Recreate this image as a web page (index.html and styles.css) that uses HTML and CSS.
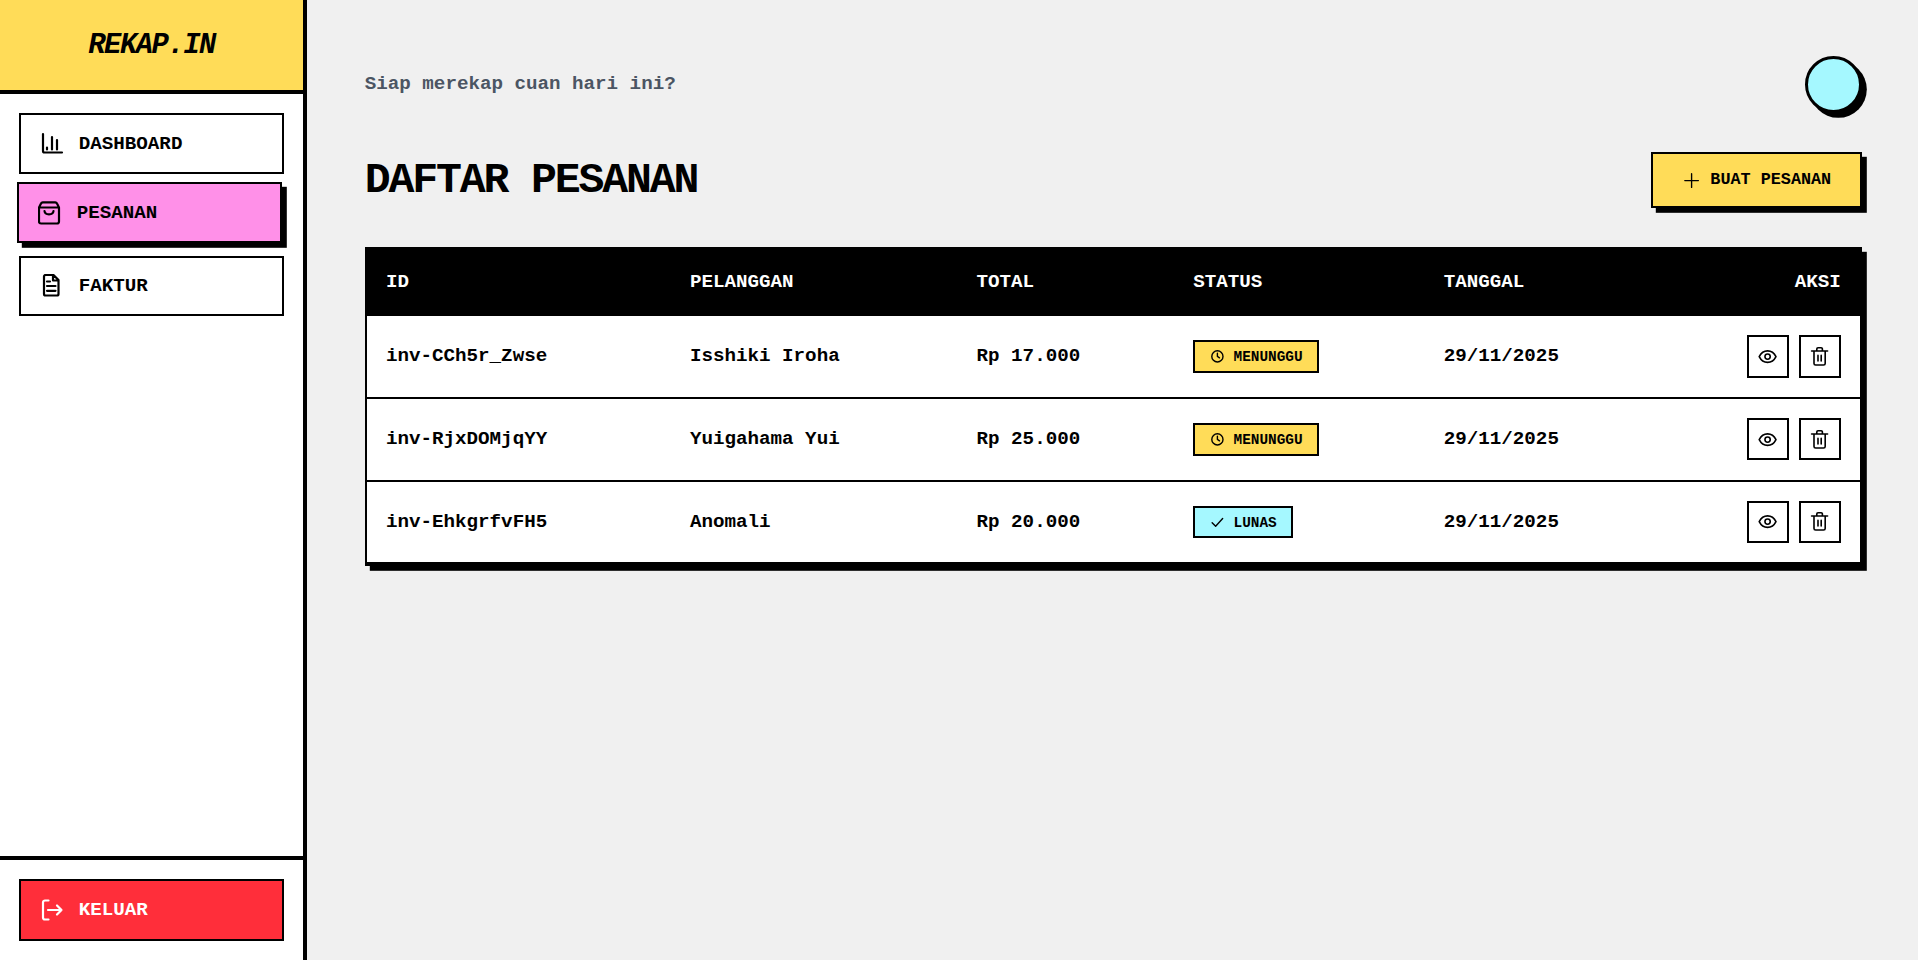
FILE: index.html
```html
<!DOCTYPE html>
<html lang="en">
<head>
    <meta charset="UTF-8">
    <meta name="viewport" content="width=device-width, initial-scale=1.0">
    <title>Rekap.in - Daftar Pesanan</title>
    <link rel="stylesheet" href="styles.css">
</head>
<body>
    <aside class="sidebar">
        <div class="brand">REKAP.IN</div>
        <nav class="nav">
            <a class="nav-item" href="#">
                <svg class="nav-icon" viewBox="0 0 24 24"><path d="M3 2v17a1.5 1.5 0 0 0 1.500 1.500H22M7 15.500v2M12 5v12.500M17 8v9.500"/></svg>
                DASHBOARD
            </a>
            <a class="nav-item active" href="#">
                <svg class="nav-icon" viewBox="0 0 24 24"><path d="M5 1.300h12a2 2 0 0 1 2 1.200l2 4v14a2 2 0 0 1-2 2H3a2 2 0 0 1-2-2v-14l2-4a2 2 0 0 1 2-1.200zM1 6.500h20M6.500 10c.5 4.500 8.500 4.500 9 0"/></svg>
                PESANAN
            </a>
            <a class="nav-item" href="#">
                <svg class="nav-icon" viewBox="0 0 24 24"><path d="M5.500 1h8l5 5v14a1.500 1.500 0 0 1-1.500 1.500H5.500A1.500 1.500 0 0 1 4 20V2.500A1.500 1.500 0 0 1 5.500 1zM13 1v5.500h5.500M7 7.500h3M7 12h8.500M7 16.800h8.500"/></svg>
                FAKTUR
            </a>
        </nav>
        <div class="sidebar-foot">
            <a class="nav-item logout" href="#">
                <svg class="nav-icon" viewBox="0 0 24 24"><path d="M8.500 2.500H5a2 2 0 0 0-2 2v15a2 2 0 0 0 2 2h3.500M8 12h13.500M17 7.500l4.500 4.500-4.500 4.500"/></svg>
                KELUAR
            </a>
        </div>
    </aside>

    <main class="main">
        <div class="topbar">
            <p class="greeting">Siap merekap cuan hari ini?</p>
            <div class="avatar"></div>
        </div>

        <div class="page-head">
            <h1 class="page-title">DAFTAR PESANAN</h1>
            <button type="button" class="btn-create">
                <svg class="btn-icon" viewBox="0 0 24 24"><path d="M12 3.500v17M3.500 12h17"/></svg>
                BUAT PESANAN
            </button>
        </div>

        <div class="table-wrap">
            <table class="orders">
                <colgroup>
                    <col class="col-id">
                    <col class="col-name">
                    <col class="col-total">
                    <col class="col-status">
                    <col class="col-date">
                    <col>
                </colgroup>
                <thead>
                    <tr>
                        <th>ID</th>
                        <th>PELANGGAN</th>
                        <th>TOTAL</th>
                        <th>STATUS</th>
                        <th>TANGGAL</th>
                        <th class="right">AKSI</th>
                    </tr>
                </thead>
                <tbody>
                    <tr>
                        <td>inv-CCh5r_Zwse</td>
                        <td>Isshiki Iroha</td>
                        <td>Rp 17.000</td>
                        <td>
                            <span class="badge waiting">
                                <svg class="badge-icon" viewBox="0 0 24 24"><circle cx="12" cy="12" r="8"/><path d="M12 7.500V12l3 2"/></svg>
                                MENUNGGU
                            </span>
                        </td>
                        <td>29/11/2025</td>
                        <td>
                            <div class="actions">
                                <button type="button" class="btn-action">
                                    <svg class="action-icon" viewBox="0 0 24 24"><path d="M1.500 12C4 7 7.500 4.800 12 4.800S20 7 22.500 12C20 17 16.500 19.200 12 19.200S4 17 1.500 12z"/><circle cx="12" cy="12" r="3.300"/></svg>
                                </button>
                                <button type="button" class="btn-action">
                                    <svg class="action-icon" viewBox="0 0 24 24"><path d="M2 5h20M5 5v15.500a2 2 0 0 0 2 2h10a2 2 0 0 0 2-2V5M8.500 5V2.500a1.500 1.500 0 0 1 1.500-1.500h4a1.500 1.500 0 0 1 1.500 1.500V5M10 10.500v7M14 10.500v7"/></svg>
                                </button>
                            </div>
                        </td>
                    </tr>
                    <tr>
                        <td>inv-RjxDOMjqYY</td>
                        <td>Yuigahama Yui</td>
                        <td>Rp 25.000</td>
                        <td>
                            <span class="badge waiting">
                                <svg class="badge-icon" viewBox="0 0 24 24"><circle cx="12" cy="12" r="8"/><path d="M12 7.500V12l3 2"/></svg>
                                MENUNGGU
                            </span>
                        </td>
                        <td>29/11/2025</td>
                        <td>
                            <div class="actions">
                                <button type="button" class="btn-action">
                                    <svg class="action-icon" viewBox="0 0 24 24"><path d="M1.500 12C4 7 7.500 4.800 12 4.800S20 7 22.500 12C20 17 16.500 19.200 12 19.200S4 17 1.500 12z"/><circle cx="12" cy="12" r="3.300"/></svg>
                                </button>
                                <button type="button" class="btn-action">
                                    <svg class="action-icon" viewBox="0 0 24 24"><path d="M2 5h20M5 5v15.500a2 2 0 0 0 2 2h10a2 2 0 0 0 2-2V5M8.500 5V2.500a1.500 1.500 0 0 1 1.500-1.500h4a1.500 1.500 0 0 1 1.500 1.500V5M10 10.500v7M14 10.500v7"/></svg>
                                </button>
                            </div>
                        </td>
                    </tr>
                    <tr>
                        <td>inv-EhkgrfvFH5</td>
                        <td>Anomali</td>
                        <td>Rp 20.000</td>
                        <td>
                            <span class="badge paid">
                                <svg class="badge-icon" viewBox="0 0 24 24"><path d="M4.500 12.500l5 5L19.500 6.500"/></svg>
                                LUNAS
                            </span>
                        </td>
                        <td>29/11/2025</td>
                        <td>
                            <div class="actions">
                                <button type="button" class="btn-action">
                                    <svg class="action-icon" viewBox="0 0 24 24"><path d="M1.500 12C4 7 7.500 4.800 12 4.800S20 7 22.500 12C20 17 16.500 19.200 12 19.200S4 17 1.500 12z"/><circle cx="12" cy="12" r="3.300"/></svg>
                                </button>
                                <button type="button" class="btn-action">
                                    <svg class="action-icon" viewBox="0 0 24 24"><path d="M2 5h20M5 5v15.500a2 2 0 0 0 2 2h10a2 2 0 0 0 2-2V5M8.500 5V2.500a1.500 1.500 0 0 1 1.500-1.500h4a1.500 1.500 0 0 1 1.500 1.500V5M10 10.500v7M14 10.500v7"/></svg>
                                </button>
                            </div>
                        </td>
                    </tr>
                </tbody>
            </table>
        </div>
    </main>
</body>
</html>
```

FILE: styles.css
```css
* {
    box-sizing: border-box;
}
body {
    margin: 0;
    height: 100vh;
    display: flex;
    overflow: hidden;
    background-color: #f0f0f0;
    color: #000000;
    font-family: "Liberation Mono", monospace;
    font-size: 19.2px;
    font-weight: 700;
}
svg {
    display: block;
    flex-shrink: 0;
    fill: none;
    stroke: currentColor;
    stroke-linecap: round;
    stroke-linejoin: round;
}

/* sidebar */
.sidebar {
    width: 307.2px;
    flex-shrink: 0;
    display: flex;
    flex-direction: column;
    background-color: #ffffff;
    border-right: 4px solid #000000;
}
.brand {
    padding: 26.6px 0 25px;
    background-color: #ffdc58;
    border-bottom: 4px solid #000000;
    font-size: 28.8px;
    line-height: 38.4px;
    font-style: italic;
    letter-spacing: -1.44px;
    text-align: center;
}
.nav {
    flex: 1;
    display: flex;
    flex-direction: column;
    gap: 10.4px;
    padding: 19.2px;
}
.nav-item {
    display: flex;
    align-items: center;
    gap: 14.4px;
    padding: 14.4px 19.2px 13.6px;
    background-color: #ffffff;
    border: 2px solid #000000;
    color: #000000;
    line-height: 28.8px;
    text-decoration: none;
}
.nav-item.active {
    background-color: #ff90e8;
    box-shadow: 4.8px 4.8px 0 #000000;
    transform: translate(-2px, -2px);
}
.nav-icon {
    width: 24px;
    height: 24px;
    stroke-width: 2.2;
}
.sidebar-foot {
    padding: 19.2px;
    border-top: 4px solid #000000;
}
.nav-item.logout {
    padding-bottom: 14.4px;
    background-color: #ff2e3a;
    color: #ffffff;
}

/* main */
.main {
    flex: 1;
    min-width: 0;
    padding: 56px 56px 0 57.6px;
}
.topbar {
    display: flex;
    justify-content: space-between;
    align-items: center;
    margin-bottom: 39px;
}
.greeting {
    margin: 0 0 2px;
    color: #4b5563;
}
.avatar {
    width: 57px;
    height: 57px;
    background-color: #a5f8ff;
    border: 3.84px solid #000000;
    border-radius: 50%;
    box-shadow: 4.8px 4.8px 0 #000000;
}
.page-head {
    display: flex;
    justify-content: space-between;
    align-items: center;
    margin-bottom: 38.4px;
}
.page-title {
    margin: 2px 0 0;
    font-size: 43.2px;
    line-height: 48px;
    letter-spacing: -2.16px;
}
.btn-create {
    display: flex;
    align-items: center;
    gap: 9.6px;
    padding: 14.4px 28.8px;
    background-color: #ffdc58;
    border: 2px solid #000000;
    box-shadow: 4.8px 4.8px 0 #000000;
    color: #000000;
    font-family: inherit;
    font-size: 16.8px;
    font-weight: 700;
    line-height: 23.5px;
}
.btn-icon {
    width: 19.2px;
    height: 19.2px;
    stroke-width: 1.7;
}

/* table */
.table-wrap {
    background-color: #ffffff;
    border: 2px solid #000000;
    box-shadow: 4.8px 4.8px 0 #000000;
}
.orders {
    width: 100%;
    table-layout: fixed;
    border-collapse: separate;
    border-spacing: 0;
}
.col-id {
    width: 304px;
}
.col-name {
    width: 286.6px;
}
.col-total {
    width: 216.6px;
}
.col-status {
    width: 250.6px;
}
.col-date {
    width: 200px;
}
.orders th {
    padding: 19.2px;
    background-color: #000000;
    color: #ffffff;
    line-height: 28.8px;
    text-align: left;
}
.orders th.right {
    text-align: right;
}
.orders td {
    padding: 19.2px;
    border-bottom: 2px solid #000000;
    white-space: nowrap;
}
.badge {
    display: inline-flex;
    align-items: center;
    gap: 7.2px;
    padding: 6px 14.4px 3.6px;
    border: 2px solid #000000;
    font-size: 14.4px;
    line-height: 19.2px;
    vertical-align: middle;
}
.badge.waiting {
    background-color: #ffdc58;
}
.badge.paid {
    background-color: #a5f8ff;
}
.badge-icon {
    width: 16.8px;
    height: 16.8px;
    margin: -1.6px 0.8px 0 -0.8px;
    stroke-width: 2;
}
.actions {
    display: flex;
    justify-content: flex-end;
    gap: 9.6px;
}
.btn-action {
    display: flex;
    align-items: center;
    justify-content: center;
    width: 42px;
    height: 42.5px;
    padding: 0 1px 0 0;
    background-color: #ffffff;
    border: 2px solid #000000;
    color: #000000;
}
.action-icon {
    width: 19.2px;
    height: 19.2px;
    stroke-width: 2;
}
```
